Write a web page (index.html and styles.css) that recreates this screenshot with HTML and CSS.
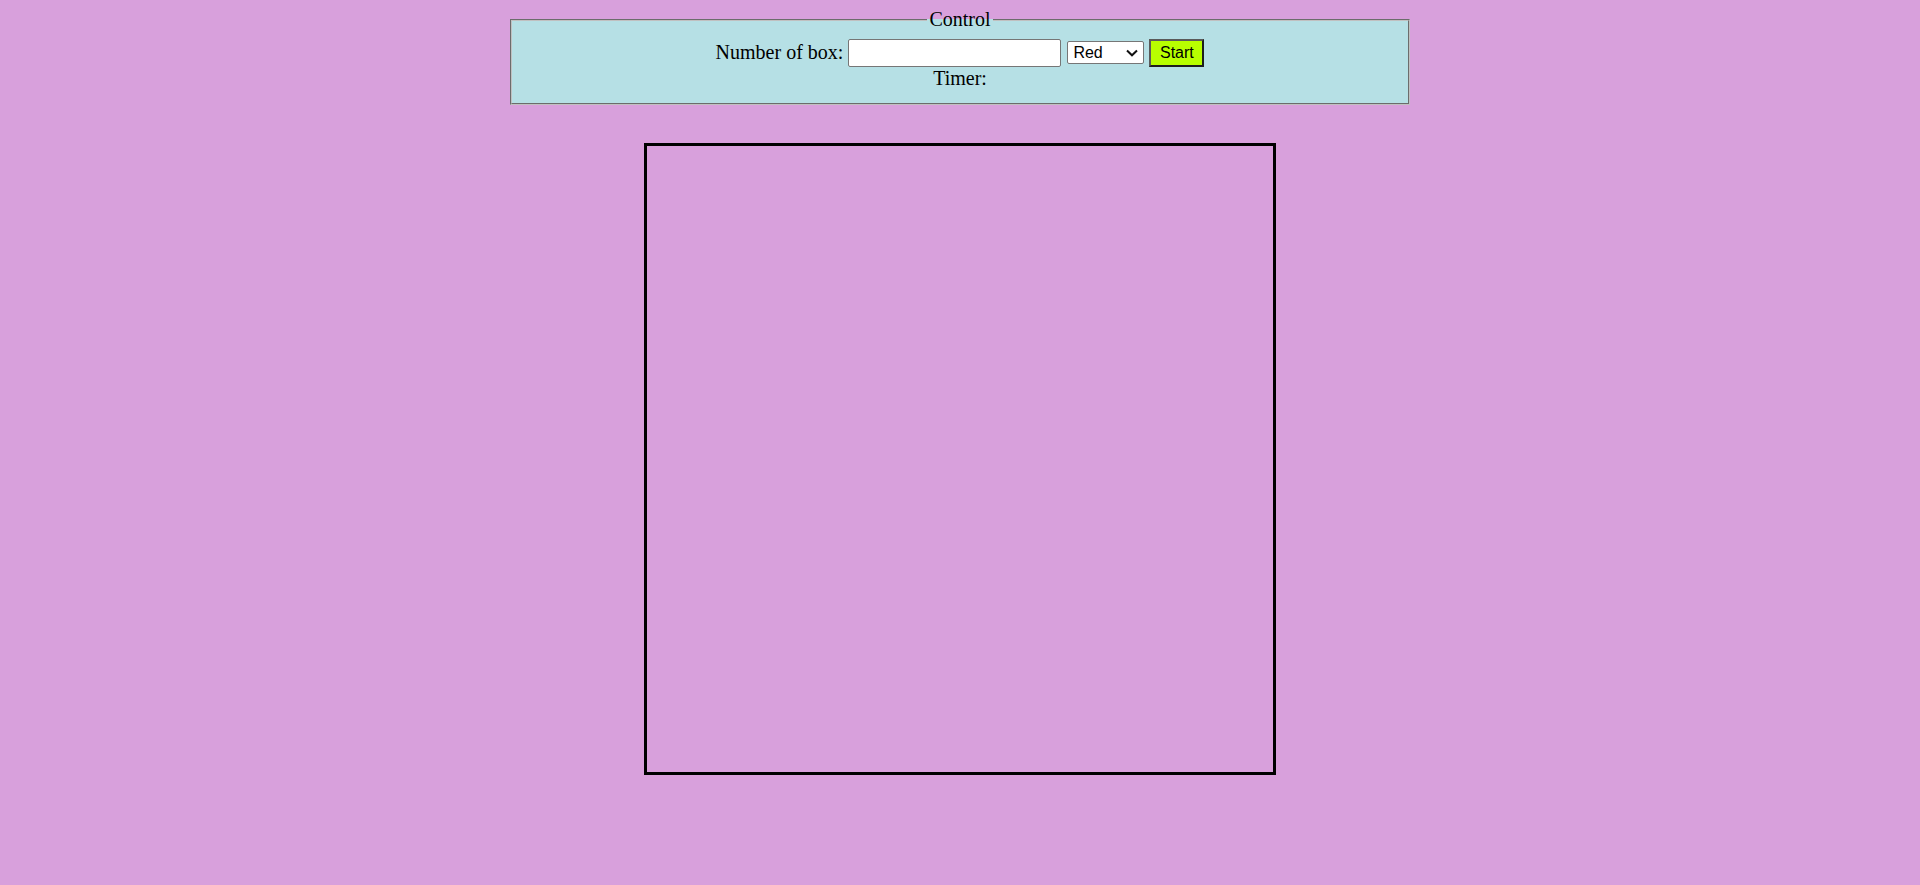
FILE: index.html
```html
<!DOCTYPE html>
<html>
<head>
<meta charset="utf-8">
<title>Boxes</title>
<link rel="stylesheet" href="styles.css">
</head>
<body>
<fieldset class="control">
  <legend class="control-title">Control</legend>
  <div class="row">
    <label class="label" for="num">Number of box:</label>
    <input class="num-input" id="num" type="text">
    <span class="select-wrap">
      <select class="color-select">
        <option>Red</option>
        <option>Green</option>
        <option>Blue</option>
      </select>
      <svg class="chevron" width="12" height="8" viewBox="0 0 12 8" aria-hidden="true">
        <path d="M1 1.5 L6 6.3 L11 1.5" fill="none" stroke="#111" stroke-width="2"/>
      </svg>
    </span>
    <button class="start-btn" type="button">Start</button>
  </div>
  <div class="timer">Timer:</div>
</fieldset>
<div class="stage"></div>
</body>
</html>
```
FILE: styles.css
```css
body {
  margin: 8px;
  background: #d8a0dc;
  font-family: "Liberation Serif", "Times New Roman", serif;
  font-size: 20px;
}
.control {
  width: 866px;
  margin: 0 auto;
  background: #b6e0e5;
  text-align: center;
  padding: 7px 15px 12.5px;
  border: 2px groove #c0c0c0;
}
.control-title {
  margin: 0 auto;
  padding: 0 2px;
}
.row {
  display: flex;
  justify-content: center;
  align-items: center;
  height: 29px;
}
.label {
  margin-right: 5px;
}
.num-input {
  box-sizing: border-box;
  width: 213px;
  height: 28px;
  border: 1px solid #767676;
  border-radius: 2px;
  background: #fff;
  font-family: "Liberation Sans", Arial, sans-serif;
  font-size: 16px;
  padding: 1px 2px;
  margin: 0;
}
.select-wrap {
  position: relative;
  display: inline-flex;
  margin-left: 6px;
}
.color-select {
  box-sizing: border-box;
  width: 77px;
  height: 23px;
  font-family: "Liberation Sans", Arial, sans-serif;
  font-size: 16px;
  color: #000;
  background: #fff;
  border: 1px solid #767676;
  border-radius: 2px;
  margin: 0;
  padding: 0 0 0 5px;
  appearance: none;
  -webkit-appearance: none;
}
.chevron {
  position: absolute;
  right: 6px;
  top: 8px;
  pointer-events: none;
}
.start-btn {
  box-sizing: border-box;
  width: 55px;
  height: 28px;
  background: #b8ff00;
  border: 2px solid;
  border-color: #5a5a5a #1e1e1e #1e1e1e #5a5a5a;
  font-family: "Liberation Sans", Arial, sans-serif;
  font-size: 16px;
  padding: 0;
  margin: 0 0 0 5px;
  color: #000;
}
.timer {
  line-height: 23px;
}
.stage {
  width: 626px;
  height: 626px;
  border: 3px solid #000;
  margin: 38px auto 0;
}
```
